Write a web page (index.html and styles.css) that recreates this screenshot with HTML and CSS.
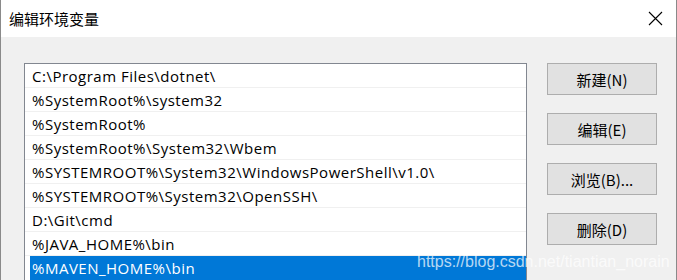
FILE: index.html
```html
<!DOCTYPE html>
<html lang="zh-CN">
<head>
  <meta charset="UTF-8" />
  <title>编辑环境变量</title>
  <link rel="stylesheet" href="styles.css">
</head>
<body>
  <div class="window">
    <div class="titlebar">
      <span class="title">编辑环境变量</span>
      <svg class="close" width="15" height="15" viewBox="0 0 15 15">
        <path d="M1 1 L14 14 M14 1 L1 14" stroke="#000" stroke-width="1.1" fill="none" />
      </svg>
    </div>
    <div class="content">
      <ul class="path-list">
        <li>C:\Program Files\dotnet\</li>
        <li>%SystemRoot%\system32</li>
        <li>%SystemRoot%</li>
        <li>%SystemRoot%\System32\Wbem</li>
        <li>%SYSTEMROOT%\System32\WindowsPowerShell\v1.0\</li>
        <li>%SYSTEMROOT%\System32\OpenSSH\</li>
        <li>D:\Git\cmd</li>
        <li>%JAVA_HOME%\bin</li>
        <li class="selected">%MAVEN_HOME%\bin</li>
      </ul>
      <div class="buttons">
        <button>新建(N)</button>
        <button>编辑(E)</button>
        <button>浏览(B)...</button>
        <button>删除(D)</button>
      </div>
    </div>
    <div class="watermark">https://blog.csdn.net/tiantian_norain</div>
  </div>
</body>
</html>
```

FILE: styles.css
```css
* {
  margin: 0;
  padding: 0;
  box-sizing: border-box;
}
body {
  width: 677px;
  height: 280px;
  overflow: hidden;
  font-family: "Open Sans", "Noto Sans CJK SC", sans-serif;
  background: #f0f0f0;
}
.window {
  position: relative;
  height: 280px;
  overflow: hidden;
  border-left: 1px solid #8a8a8a;
  border-right: 1px solid #8a8a8a;
  background: #f0f0f0;
}
.titlebar {
  height: 37px;
  background: #fff;
  display: flex;
  align-items: center;
  justify-content: space-between;
  padding: 0 13px 0 8px;
}
.title {
  font-family: "Noto Sans CJK SC", sans-serif;
  font-size: 15px;
  color: #000;
  margin-top: -1px;
}
.close {
  display: block;
}
.content {
  display: flex;
  gap: 20px;
  padding: 26px 0 0 23px;
}
.path-list {
  list-style: none;
  width: 503px;
  height: 230px;
  background: #fff;
  border: 1px solid #828790;
  border-bottom: none;
}
.path-list li {
  height: 24px;
  padding: 2px 0 0 7px;
  line-height: 21px;
  font-size: 15px;
  letter-spacing: 0.5px;
  color: #000;
  border-bottom: 1px solid #f0f0f0;
  white-space: nowrap;
}
.path-list li.selected {
  background: #0078d7;
  color: #fff;
  margin-left: 5px;
  padding-left: 2px;
  border-bottom: none;
}
.buttons {
  display: flex;
  flex-direction: column;
  gap: 18px;
}
.buttons button {
  width: 110px;
  height: 32px;
  background: #e1e1e1;
  border: 1px solid #adadad;
  font-family: "Noto Sans CJK SC", sans-serif;
  font-size: 15px;
  color: #000;
}
.watermark {
  position: absolute;
  left: 416px;
  top: 253px;
  font-family: "Liberation Sans", Arial, sans-serif;
  font-size: 16px;
  color: rgba(255, 255, 255, 0.72);
  white-space: nowrap;
}
```
